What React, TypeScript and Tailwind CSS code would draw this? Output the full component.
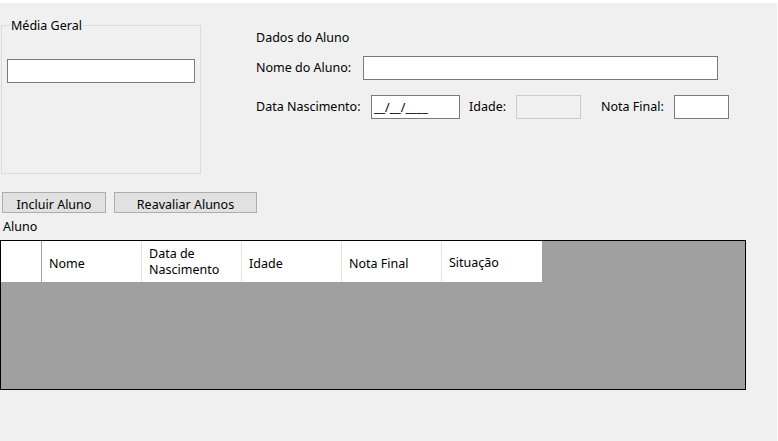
import React from 'react';

const font = { fontFamily: '"Noto Sans", "Open Sans", sans-serif' };

function HeaderCell({ children, className = 'pt-[4px]' }: { children?: React.ReactNode; className?: string }) {
  return (
    <div className={`w-[100px] h-full border-r border-[#e3e3e3] flex items-center pl-[7px] leading-[16px] ${className}`}>
      {children}
    </div>
  );
}

export default function App() {
  return (
    <div className="w-[778px] h-[441px] bg-white text-[12.5px] text-black" style={font}>
      <div className="w-[777px] h-[438px] mt-[3px] bg-[#f0f0f0] flex flex-col">
        {/* Parte de cima */}
        <div className="flex">
          <fieldset className="ml-[1px] mt-[14px] w-[200px] h-[157px] border border-[#dcdcdc] px-[5px]">
            <legend className="ml-[3px] px-[1px] leading-[16px] pt-[1px]">Média Geral</legend>
            <input className="mt-[25px] w-[188px] h-[24px] bg-white border border-[#7a7a7a] outline-none" />
          </fieldset>

          <div className="ml-[55px] mt-[27px] flex flex-col">
            <div className="leading-[16px]">Dados do Aluno</div>
            <div className="mt-[10px] flex items-center">
              <span className="w-[107px]">Nome do Aluno:</span>
              <input className="w-[355px] h-[24px] bg-white border border-[#7a7a7a] outline-none" />
            </div>
            <div className="mt-[15px] flex items-center">
              <span className="w-[115px]">Data Nascimento:</span>
              <div className="w-[89px] h-[24px] bg-white border border-[#7a7a7a] flex items-center pl-[2px] pt-[3px]">
                __/__/____
              </div>
              <span className="ml-[9px] w-[47px]">Idade:</span>
              <div className="w-[65px] h-[24px] bg-[#f0f0f0] border border-[#cccccc]" />
              <span className="ml-[20px] w-[73px]">Nota Final:</span>
              <input className="w-[55px] h-[24px] bg-white border border-[#7a7a7a] outline-none" />
            </div>
          </div>
        </div>

        {/* Botões */}
        <div className="mt-[18px] flex">
          <button className="ml-[2px] w-[104px] h-[21px] bg-[#e1e1e1] border border-[#adadad] leading-[19px] pt-[2px]">
            Incluir Aluno
          </button>
          <button className="ml-[8px] w-[143px] h-[21px] bg-[#e1e1e1] border border-[#adadad] leading-[19px] pt-[2px]">
            Reavaliar Alunos
          </button>
        </div>

        <div className="mt-[6px] ml-[3px] leading-[16px]">Aluno</div>

        {/* Grade */}
        <div className="mt-[5px] w-[746px] h-[150px] border border-black bg-[#a0a0a0]">
          <div className="w-[541px] h-[41px] bg-white flex">
            <div className="w-[41px] h-full border-r border-[#a0a0a0]" />
            <HeaderCell>Nome</HeaderCell>
            <HeaderCell className="pt-[1px]">
              Data de
              <br />
              Nascimento
            </HeaderCell>
            <HeaderCell>Idade</HeaderCell>
            <HeaderCell>Nota Final</HeaderCell>
            <div className="w-[100px] h-full flex items-center pl-[7px] pt-[4px]">Situação</div>
          </div>
        </div>
      </div>
    </div>
  );
}
